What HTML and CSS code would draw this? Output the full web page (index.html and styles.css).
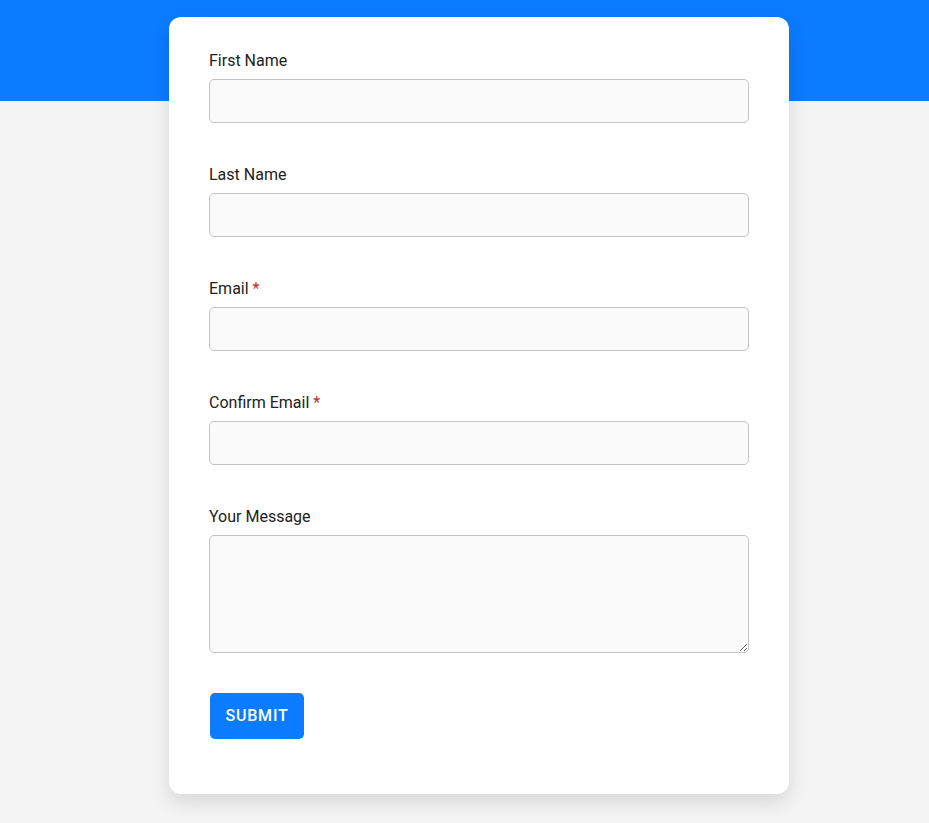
FILE: index.html
```html
<!DOCTYPE html>
<html lang="en">
<head>
<meta charset="UTF-8">
<title>Contact</title>
<link rel="stylesheet" href="styles.css">
</head>
<body>

<div class="banda"></div>

<form class="tarjeta">
  <div class="campo">
    <label for="nombre">First Name</label>
    <input type="text" id="nombre">
  </div>
  <div class="campo">
    <label for="apellido">Last Name</label>
    <input type="text" id="apellido">
  </div>
  <div class="campo">
    <label for="email">Email <span class="req">*</span></label>
    <input type="email" id="email">
  </div>
  <div class="campo">
    <label for="email2">Confirm Email <span class="req">*</span></label>
    <input type="email" id="email2">
  </div>
  <div class="campo">
    <label for="mensaje">Your Message</label>
    <textarea id="mensaje"></textarea>
  </div>
  <button type="button" class="boton">Submit</button>
</form>

</body>
</html>
```

FILE: styles.css
```css
body {
  margin: 0;
  padding-bottom: 40px;
  background-color: #f4f4f4;
  font-family: Roboto, "Liberation Sans", sans-serif;
  color: #222;
}

.banda {
  height: 101px;
  background-color: #0b7bff;
}

.tarjeta {
  width: 620px;
  box-sizing: border-box;
  margin: -84px 0 0 169px;
  padding: 33px 40px 55px 40px;
  background-color: #fff;
  border-radius: 12px;
  box-shadow: 0 8px 20px rgba(0, 0, 0, 0.12);
}

.campo {
  display: flex;
  flex-direction: column;
  margin-bottom: 41px;
}

.campo:last-of-type {
  margin-bottom: 40px;
}

.campo label {
  font-size: 16px;
  line-height: 21px;
  margin-bottom: 8px;
}

.req {
  color: #c62828;
}

.campo input,
.campo textarea {
  box-sizing: border-box;
  width: 540px;
  height: 44px;
  border: 1px solid #c4c4c4;
  border-radius: 5px;
  background-color: #fafafa;
  font-family: inherit;
  font-size: 15px;
  padding: 0 12px;
}

.campo textarea {
  height: 118px;
  padding: 10px 12px;
}

.boton {
  display: block;
  width: 94px;
  height: 46px;
  margin-left: 1px;
  padding: 0 0 2px 0;
  border: none;
  border-radius: 5px;
  background-color: #0b7bff;
  color: #fff;
  font-family: inherit;
  font-size: 16px;
  font-weight: 500;
  letter-spacing: 0.8px;
  text-transform: uppercase;
}
```
